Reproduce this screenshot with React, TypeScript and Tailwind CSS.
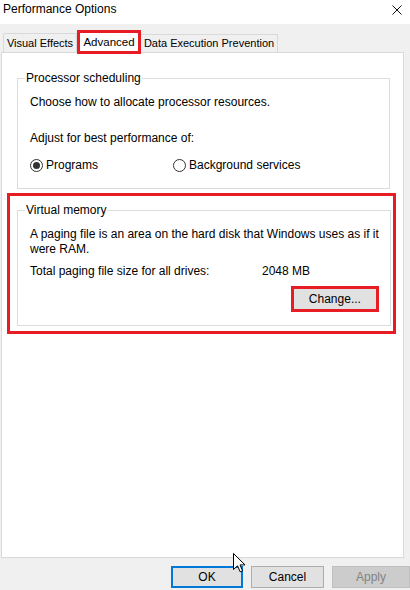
import React from "react";

// ── Windows "Performance Options" dialog (Advanced tab) ─────────────────────

const font = { fontFamily: '"Liberation Sans", Arial, sans-serif' };

function Radio({ checked, label }: { checked?: boolean; label: string }) {
  return (
    <label className="flex items-center gap-[3px] h-[15px]">
      <span className="w-[13px] h-[13px] rounded-full border border-[#333] bg-white flex items-center justify-center">
        {checked && <span className="w-[7px] h-[7px] rounded-full bg-[#333]" />}
      </span>
      <span>{label}</span>
    </label>
  );
}

function Cursor() {
  return (
    <svg
      className="absolute left-[233px] top-[553px] z-20"
      width="13"
      height="20"
      viewBox="0 0 13 20"
    >
      <path
        d="M0.5 0.5 L0.5 16.5 L4.5 12.8 L7.2 18.8 L9.6 17.8 L7 11.9 L12 11.9 Z"
        fill="#fff"
        stroke="#000"
        strokeWidth="1"
        strokeLinejoin="round"
      />
    </svg>
  );
}

export default function App() {
  return (
    <div
      className="relative w-[410px] h-[590px] bg-[#f0f0f0] overflow-hidden text-[12px] leading-[15px] text-black whitespace-nowrap"
      style={font}
    >
      {/* Title bar */}
      <div className="h-[24px] bg-white flex items-start justify-between">
        <span className="ml-[3px] mt-[2px]">Performance Options</span>
        <svg className="mt-[5px] mr-[8px]" width="10" height="10" viewBox="0 0 10 10">
          <path d="M0.5 0.5 L9.5 9.5 M9.5 0.5 L0.5 9.5" stroke="#111" strokeWidth="1" />
        </svg>
      </div>

      {/* Tabs */}
      <div className="flex items-end h-[28px] pl-[3px]">
        <div className="shrink-0 w-[74px] h-[19px] border border-b-0 border-[#d9d9d9] bg-[#f0f0f0] flex items-center justify-center text-[11px]">
          Visual Effects
        </div>
        <div className="shrink-0 relative z-10 -mb-[2px] w-[64px] h-[24px] border-[3px] border-[#e81c24] bg-white flex items-center justify-center text-[11.5px]">
          Advanced
        </div>
        <div className="shrink-0 w-[137px] h-[18px] border border-b-0 border-l-0 border-[#d9d9d9] bg-[#f0f0f0] flex items-center justify-center text-[11px]">
          Data Execution Prevention
        </div>
      </div>

      {/* Tab panel */}
      <div className="ml-[1px] w-[403px] h-[506px] border border-[#d9d9d9] bg-white">
        <fieldset className="ml-[15px] mt-[18px] w-[373px] border border-[#dcdcdc]">
          <legend className="ml-[7px] px-[1px]">Processor scheduling</legend>
          <div className="pl-[12px] pt-[9px] pb-[15px]">
            <div>Choose how to allocate processor resources.</div>
            <div className="mt-[21px]">Adjust for best performance of:</div>
            <div className="mt-[12px] flex">
              <div className="w-[143px]">
                <Radio checked label="Programs" />
              </div>
              <Radio label="Background services" />
            </div>
          </div>
        </fieldset>

        {/* Virtual memory – highlighted */}
        <div className="ml-[5px] mt-[4px] w-[389px] border-[3px] border-[#e81c24] pl-[7px] pt-[7px] pb-[5px]">
          <fieldset className="w-[373px] border border-[#dcdcdc]">
            <legend className="ml-[7px] px-[1px]">Virtual memory</legend>
            <div className="pl-[12px] pr-[11px] pt-[9px] pb-[13px]">
              <div>
                A paging file is an area on the hard disk that Windows uses as if it
                <br />
                were RAM.
              </div>
              <div className="mt-[7px] flex">
                <span className="w-[232px]">Total paging file size for all drives:</span>
                <span>2048 MB</span>
              </div>
              <div className="mt-[7px] flex justify-end">
                <div className="w-[88px] h-[26px] border-[3px] border-[#e81c24]">
                  <button className="w-full h-full border border-[#e1e1e1] bg-[#e1e1e1] flex items-center justify-center">
                    Change...
                  </button>
                </div>
              </div>
            </div>
          </fieldset>
        </div>
      </div>

      {/* Dialog buttons */}
      <div className="mt-[8px] flex justify-end gap-[8px]">
        <button className="w-[72px] h-[22px] border-2 border-[#0078d7] bg-[#e1e1e1]">OK</button>
        <button className="w-[73px] h-[22px] border border-[#adadad] bg-[#e1e1e1]">Cancel</button>
        <button className="w-[78px] h-[22px] border border-[#bfbfbf] bg-[#cccccc] text-[#838383]">Apply</button>
      </div>

      <Cursor />
    </div>
  );
}
